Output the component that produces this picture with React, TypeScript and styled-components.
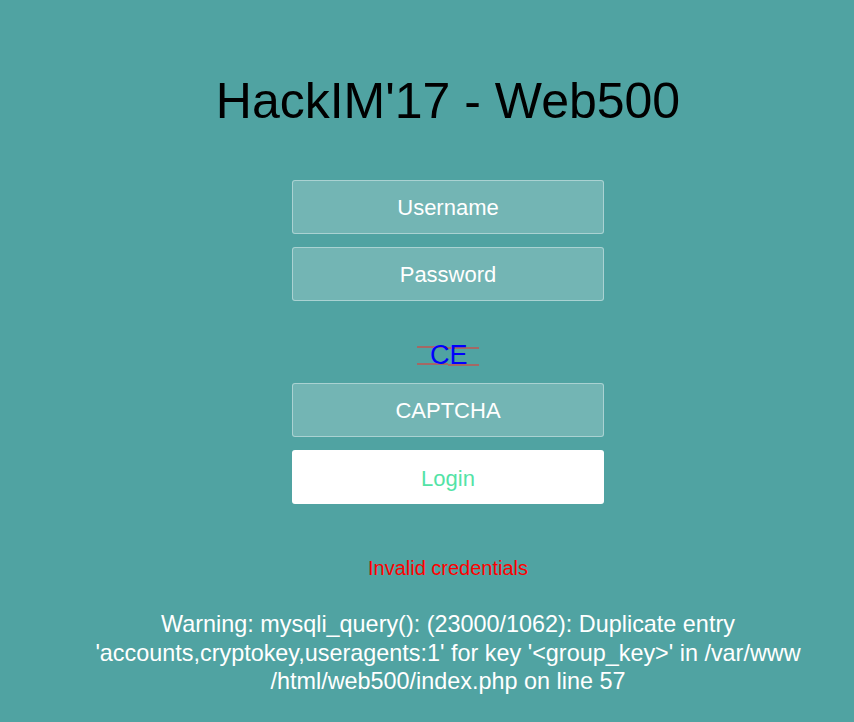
import React from "react";
import styled, { createGlobalStyle } from "styled-components";

const GlobalStyle = createGlobalStyle`
  html, body {
    margin: 0;
    padding: 0;
    background: #50a3a2;
    overflow: hidden;
  }
  body {
    font-family: "Liberation Sans", Arial, sans-serif;
  }
`;

const Page = styled.div`
  width: 896px;
  min-height: 722px;
  display: flex;
  flex-direction: column;
  align-items: center;
  padding-top: 73px;
  box-sizing: border-box;
`;

const Title = styled.h1`
  margin: 0;
  font-size: 50px;
  font-weight: 400;
  color: #000;
  line-height: 57.5px;
`;

const Form = styled.form`
  width: 312px;
  margin-top: 49.5px;
  display: flex;
  flex-direction: column;
  align-items: center;
`;

const Field = styled.input`
  display: block;
  box-sizing: border-box;
  width: 312px;
  height: 54px;
  margin: 0 0 13px;
  padding: 2px 10px 0;
  border: 1px solid rgba(255, 255, 255, 0.4);
  border-radius: 3px;
  background: rgba(255, 255, 255, 0.2);
  color: #fff;
  font-family: "Liberation Sans", Arial, sans-serif;
  font-size: 22px;
  text-align: center;
  outline: none;

  &::placeholder {
    color: #fff;
    opacity: 1;
  }
`;

const CaptchaBox = styled.div`
  height: 32px;
  margin: 26px 0 11px;
  display: flex;
  justify-content: center;
`;

const LoginButton = styled.button`
  box-sizing: border-box;
  width: 312px;
  height: 54px;
  padding: 3px 0 0;
  border: 0;
  border-radius: 3px;
  background: #fff;
  color: #53e3a6;
  font-family: "Liberation Sans", Arial, sans-serif;
  font-size: 22px;
  cursor: pointer;
`;

const ErrorText = styled.p`
  margin: 53px 0 0;
  color: #ff0000;
  font-size: 20px;
  line-height: 23px;
`;

const Warning = styled.p`
  margin: 30px 0 0;
  color: #fff;
  font-size: 23.4px;
  line-height: 28.5px;
  text-align: center;
`;

const Captcha = () => (
  <svg width="62" height="32" viewBox="0 0 62 32">
    <line x1="0" y1="7" x2="30" y2="7" stroke="#e0403c" strokeWidth="1.2" />
    <line x1="30" y1="8" x2="62" y2="8" stroke="#e0403c" strokeWidth="1.2" />
    <line x1="0" y1="24" x2="31" y2="24" stroke="#e0403c" strokeWidth="1.2" />
    <line x1="31" y1="25" x2="62" y2="25" stroke="#e0403c" strokeWidth="1.2" />
    <text
      x="13"
      y="24"
      fill="#0000ff"
      fontSize="27"
      fontFamily="Liberation Sans, Arial, sans-serif"
    >
      CE
    </text>
  </svg>
);

export default function App() {
  return (
    <>
      <GlobalStyle />
      <Page>
        <Title>HackIM'17 - Web500</Title>
        <Form onSubmit={(e) => e.preventDefault()}>
          <Field type="text" placeholder="Username" />
          <Field type="password" placeholder="Password" />
          <CaptchaBox>
            <Captcha />
          </CaptchaBox>
          <Field type="text" placeholder="CAPTCHA" />
          <LoginButton type="submit">Login</LoginButton>
        </Form>
        <ErrorText>Invalid credentials</ErrorText>
        <Warning>
          Warning: mysqli_query(): (23000/1062): Duplicate entry
          <br />
          'accounts,cryptokey,useragents:1' for key '&lt;group_key&gt;' in /var/www
          <br />
          /html/web500/index.php on line 57
        </Warning>
      </Page>
    </>
  );
}
